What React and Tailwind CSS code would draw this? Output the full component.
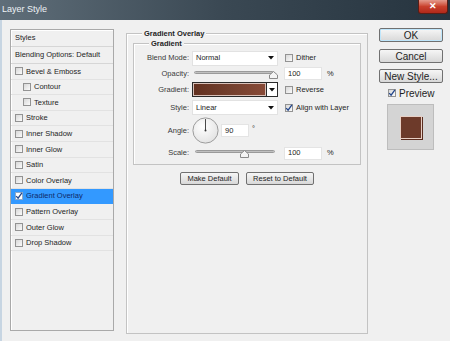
import React from 'react';

function Check({ checked, light }) {
  return (
    <span
      className={
        'flex h-[8px] w-[8px] shrink-0 items-center justify-center border ' +
        (light ? 'border-[#8fa8c8] bg-white' : 'border-[#939393] bg-gradient-to-br from-[#d8d8d8] to-[#fbfbfb]')
      }
    >
      {checked && (
        <svg width="8" height="8" viewBox="0 0 8 8" className="overflow-visible">
          <path d="M1.2 4.1 L3.1 6.2 L6.9 0.9" fill="none" stroke="#23468c" strokeWidth="1.3" />
        </svg>
      )}
    </span>
  );
}

function Arrow() {
  return (
    <svg width="6" height="4" viewBox="0 0 6 4">
      <path d="M0 0 H6 L3 3.6 Z" fill="#111" />
    </svg>
  );
}

function Select({ value }) {
  return (
    <div className="flex h-[15px] w-[86px] items-center justify-between border border-[#e2e2e2] bg-white pl-[3px] pr-[3px]">
      <span>{value}</span>
      <Arrow />
    </div>
  );
}

function Slider({ thumb }) {
  return (
    <div className="relative ml-[2px] h-[12px] w-[80px]">
      <div className="absolute left-0 right-0 top-[3px] h-[3px] rounded-full border border-[#9a9a9a] bg-gradient-to-b from-[#9c9c9c] to-[#e6e6e6]" />
      <svg width="9" height="8" viewBox="0 0 9 8" className={'absolute top-[3px] ' + thumb}>
        <path d="M4.5 0.5 L8.5 4 V7.5 H0.5 V4 Z" fill="#f4f4f4" stroke="#8a8a8a" />
      </svg>
    </div>
  );
}

function NumBox({ value, w }) {
  return (
    <div className={'flex h-[13px] items-center border border-[#e4e4e4] bg-white pl-[3px] ' + w}>
      {value}
    </div>
  );
}

function Btn({ children, className }) {
  return (
    <div
      className={
        'flex items-center justify-center rounded-[2px] border border-[#707070] bg-gradient-to-b from-[#f6f6f6] to-[#d8d8d8] ' +
        className
      }
    >
      {children}
    </div>
  );
}

const styleItems = [
  { name: 'Bevel & Emboss' },
  { name: 'Contour', sub: true },
  { name: 'Texture', sub: true },
  { name: 'Stroke' },
  { name: 'Inner Shadow' },
  { name: 'Inner Glow' },
  { name: 'Satin' },
  { name: 'Color Overlay' },
  { name: 'Gradient Overlay', on: true },
  { name: 'Pattern Overlay' },
  { name: 'Outer Glow' },
  { name: 'Drop Shadow' },
];

export default function App() {
  return (
    <div className="flex h-[341px] w-[450px] flex-col overflow-hidden bg-[#f0f0f0] font-['Liberation_Sans',Arial,sans-serif] text-[7.5px] text-[#1e1e1e]">
      {/* title bar */}
      <div className="flex h-[20px] shrink-0 items-start bg-gradient-to-r from-[#5f6e79] via-[#3a4853] to-[#26343f]">
        <span className="ml-[2px] mt-[3px] text-[9px] text-[#eef3f6]">Layer Style</span>
        <div className="ml-auto mr-[2px] flex h-[14px] w-[30px] items-center justify-center rounded-b-[3px] border border-t-0 border-[#5a1d15] bg-gradient-to-b from-[#e39a8c] via-[#c9402c] to-[#b0281a] text-[9px] font-bold text-white">
          ✕
        </div>
      </div>

      <div className="flex flex-1 items-start border-l-2 border-[#c7d5e2] pl-[8px] pt-[9px]">
        {/* styles list */}
        <div className="flex h-[302px] w-[104px] shrink-0 flex-col border border-[#a9a9a9] bg-[#f0f0f0] shadow-[inset_1px_1px_0_#fff]">
          <div className="flex h-[17px] items-center border-b border-[#d6d6d6] pl-[4px]">Styles</div>
          <div className="flex h-[17px] items-center border-b border-[#d6d6d6] pl-[4px]">Blending Options: Default</div>
          {styleItems.map((it) => (
            <div
              key={it.name}
              className={
                'flex h-[15.6px] items-center gap-[3px] border-b ' +
                (it.sub ? 'pl-[12px] ' : 'pl-[4px] ') +
                (it.on ? 'border-[#3399ff] bg-[#3399ff] text-[#0f2a6b]' : 'border-[#e2e2e2]')
              }
            >
              <Check checked={it.on} light={it.on} />
              <span>{it.name}</span>
            </div>
          ))}
        </div>

        {/* gradient overlay group */}
        <div className="relative ml-[12px] mt-[4px] flex h-[301px] w-[242px] shrink-0 flex-col border border-[#c3c3c3] shadow-[inset_1px_1px_0_#fff]">
          <span className="absolute left-[15px] top-[-5px] bg-[#f0f0f0] px-[2px] font-bold leading-[9px]">Gradient Overlay</span>
          <div className="relative mx-[6px] mt-[9px] flex flex-col border border-[#c3c3c3] pb-[2px] pt-[6px] shadow-[inset_1px_1px_0_#fff]">
            <span className="absolute left-[15px] top-[-5px] bg-[#f0f0f0] px-[2px] font-bold leading-[9px]">Gradient</span>

            <div className="flex h-[16px] items-center">
              <span className="w-[55px] text-right text-[#3a3a3a]">Blend Mode:</span>
              <div className="ml-[3px]"><Select value="Normal" /></div>
              <div className="ml-[7px] flex items-center gap-[3px]"><Check /><span>Dither</span></div>
            </div>

            <div className="flex h-[15px] items-center">
              <span className="w-[55px] text-right text-[#3a3a3a]">Opacity:</span>
              <div className="ml-[3px] w-[86px]"><Slider thumb="left-[75px]" /></div>
              <div className="ml-[6px] flex items-center">
                <NumBox value="100" w="w-[38px]" />
                <span className="ml-[5px]">%</span>
              </div>
            </div>

            <div className="flex h-[17px] items-center">
              <span className="w-[55px] text-right text-[#3a3a3a]">Gradient:</span>
              <div className="ml-[3px] flex h-[15px] w-[86px] border border-[#2a2a2a]">
                <div className="flex-1 border border-[#d8c0b8] bg-gradient-to-r from-[#633120] via-[#73402e] to-[#884a37]" />
                <div className="flex w-[11px] items-center justify-center border-l border-[#2a2a2a] bg-white"><Arrow /></div>
              </div>
              <div className="ml-[7px] flex items-center gap-[3px]"><Check /><span>Reverse</span></div>
            </div>

            <div className="flex h-[19px] items-center">
              <span className="w-[55px] text-right text-[#3a3a3a]">Style:</span>
              <div className="ml-[3px]"><Select value="Linear" /></div>
              <div className="ml-[7px] flex items-center gap-[3px]"><Check checked /><span>Align with Layer</span></div>
            </div>

            <div className="flex h-[27px] items-center">
              <span className="w-[55px] text-right text-[#3a3a3a]">Angle:</span>
              <div className="ml-[3px] flex items-center">
                <svg width="27" height="27" viewBox="0 0 27 27">
                  <defs>
                    <radialGradient id="dial" cx="40%" cy="35%" r="70%">
                      <stop offset="0" stopColor="#ffffff" />
                      <stop offset="1" stopColor="#e2e2e2" />
                    </radialGradient>
                  </defs>
                  <circle cx="13.5" cy="13.5" r="12.6" fill="url(#dial)" stroke="#9c9c9c" />
                  <line x1="13.5" y1="13.5" x2="13.5" y2="2" stroke="#4a4a4a" strokeWidth="1" />
                  <circle cx="13.5" cy="13.5" r="1" fill="#333" />
                </svg>
                <div className="ml-[2px]"><NumBox value="90" w="w-[28px]" /></div>
                <span className="ml-[3px] self-start pt-[6px]">°</span>
              </div>
            </div>

            <div className="flex h-[18px] items-center">
              <span className="w-[55px] text-right text-[#3a3a3a]">Scale:</span>
              <div className="ml-[4px] w-[85px]"><Slider thumb="left-[45px]" /></div>
              <div className="ml-[6px] flex items-center">
                <NumBox value="100" w="w-[38px]" />
                <span className="ml-[5px]">%</span>
              </div>
            </div>
          </div>

          <div className="mt-[7px] flex justify-center gap-[7px]">
            <Btn className="h-[13px] w-[59px]">Make Default</Btn>
            <Btn className="h-[13px] w-[68px]">Reset to Default</Btn>
          </div>
        </div>

        {/* right column */}
        <div className="ml-[11px] mt-[-1px] flex w-[64px] shrink-0 flex-col text-[10px]">
          <Btn className="h-[14px] border-[#3c7fb1] from-[#f2f8fb] to-[#d6e6ef] shadow-[inset_0_0_0_1px_#bfe6fb]">OK</Btn>
          <Btn className="mt-[7px] h-[14px]">Cancel</Btn>
          <Btn className="mt-[6px] h-[14px]">New Style...</Btn>
          <div className="ml-[9px] mt-[5px] flex h-[10px] items-center gap-[3px]">
            <Check checked />
            <span>Preview</span>
          </div>
          <div className="ml-[8px] mt-[6px] flex h-[46px] w-[47px] items-center justify-center border border-[#bdbdbd] bg-[#d4d4d4]">
            <div className="h-[23px] w-[22px] border border-[#e8cfc5] bg-[#6d3a2a] shadow-[1px_1px_0_#5a2c1e]" />
          </div>
        </div>
      </div>
    </div>
  );
}
